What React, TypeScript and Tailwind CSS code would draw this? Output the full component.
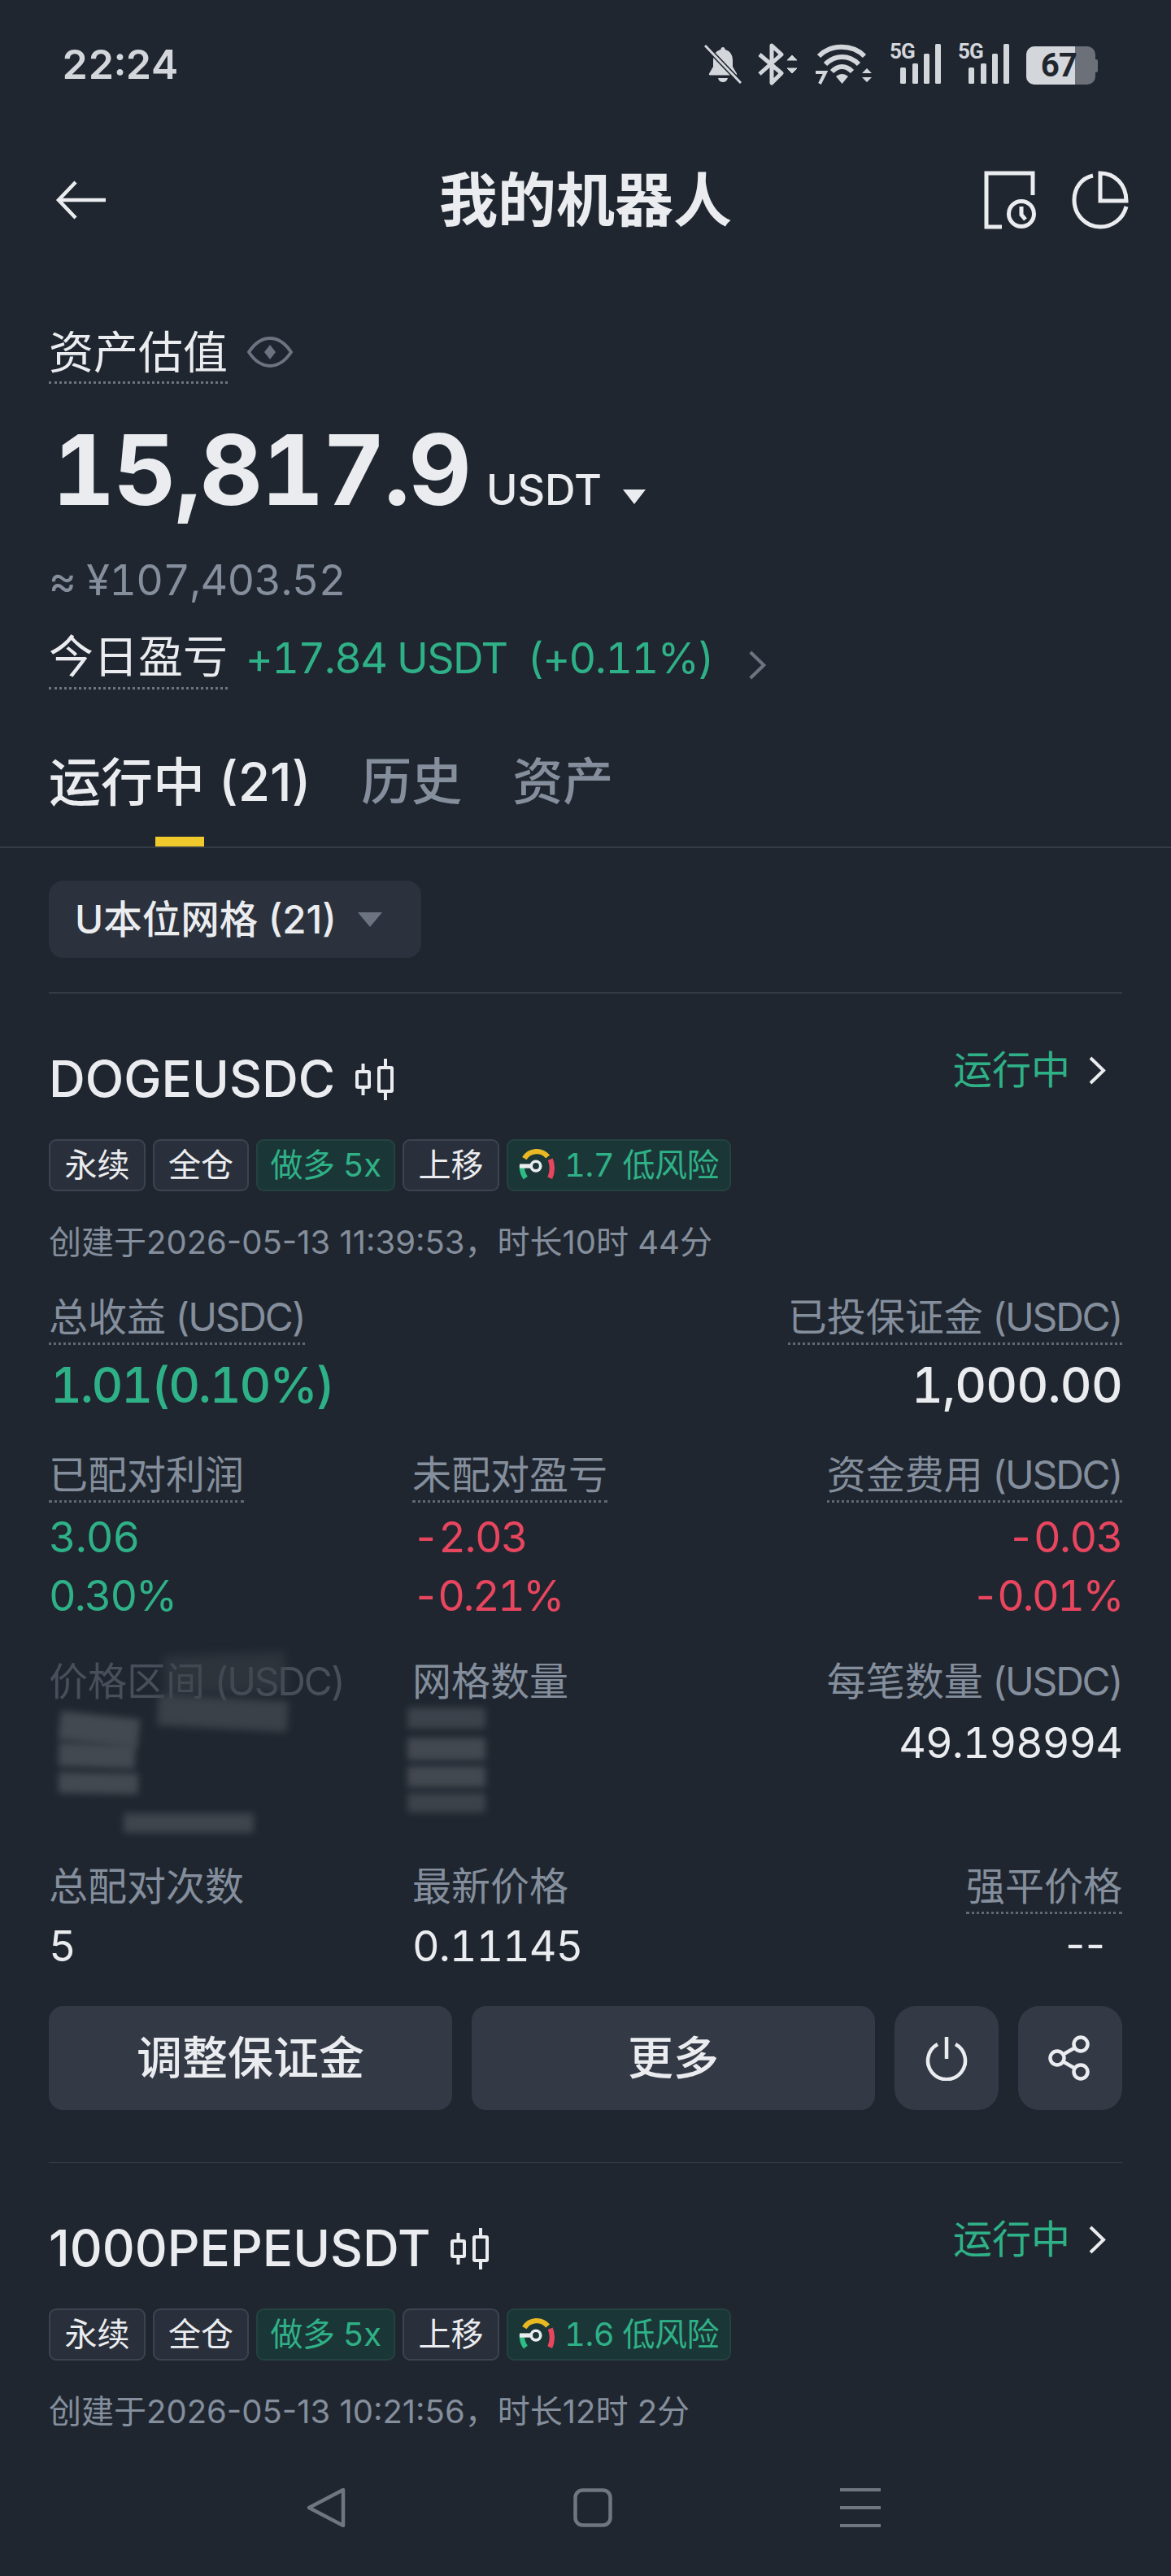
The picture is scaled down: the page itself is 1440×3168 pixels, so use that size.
import React from "react";

const Bell = () => (
  <svg width="46" height="48" viewBox="0 0 46 48" fill="none" className="shrink-0">
    <path d="M23 3c1.600 0 2.500 1 2.700 3 6 1.600 9.300 6.500 9.300 13v8l5 8.500c.5 1-.1 2-1.200 2H7.200c-1.100 0-1.700-1-1.200-2L11 27v-8c0-6.500 3.300-11.400 9.300-13 .2-2 1.100-3 2.700-3z" fill="#d3d6db" />
    <path d="M17 41h12c-.6 3-3 5-6 5s-5.400-2-6-5z" fill="#d3d6db" />
    <path d="M1 1l44 46" stroke="#1f262f" strokeWidth="6" />
    <path d="M1 1l44 46" stroke="#d3d6db" strokeWidth="3" />
  </svg>
);

const Bluetooth = () => (
  <svg width="50" height="52" viewBox="0 0 50 52" fill="none" className="shrink-0">
    <path d="M2 14l27 23-12 12V3l12 11L2 38" stroke="#d3d6db" strokeWidth="5" strokeLinejoin="round" />
    <path d="M36 21l6-6 6 6zM36 31l6 6 6-6z" fill="#d3d6db" stroke="#d3d6db" strokeWidth="1" />
  </svg>
);

const Wifi = () => (
  <svg width="72" height="52" viewBox="0 0 72 52" fill="none" className="shrink-0">
    <path d="M5 16C20 1 46 1 61 16" stroke="#d3d6db" strokeWidth="6" />
    <path d="M13 26C25 14 42 14 54 26" stroke="#d3d6db" strokeWidth="6" />
    <path d="M21 35C29 27 38 27 46 35" stroke="#d3d6db" strokeWidth="6" />
    <path d="M26 41c5-4 10-4 15 0l-7.500 9z" fill="#d3d6db" />
    <path d="M58 37l6-6 6 6zM58 42l6 6 6-6z" fill="#d3d6db" />
    <path d="M1 36h12l-7 14" stroke="#d3d6db" strokeWidth="4" />
  </svg>
);

const Signal = () => (
  <div className="relative w-[64px] h-[52px] shrink-0">
    <span className="absolute left-0 top-[-3px] text-[26px] leading-[26px] font-bold text-[#d3d6db] tracking-[-1px] [font-family:Roboto,sans-serif]">5G</span>
    <svg width="64" height="52" viewBox="0 0 64 52" fill="#d3d6db">
      <rect x="13" y="30" width="7" height="20" rx="1.500" />
      <rect x="28" y="25" width="7" height="25" rx="1.500" />
      <rect x="42" y="13" width="7" height="37" rx="1.500" />
      <rect x="56" y="1" width="7" height="49" rx="1.500" />
    </svg>
  </div>
);

const Battery = () => (
  <div className="relative w-[88px] h-[47px] shrink-0 mt-[3px]">
    <div className="absolute left-0 top-0 w-[85px] h-[47px] rounded-[10px] bg-[#6b7079]" />
    <div className="absolute left-[85px] top-[16px] w-[3px] h-[16px] rounded-r-[2px] bg-[#6b7079]" />
    <div className="absolute left-0 top-0 w-[60px] h-[47px] rounded-l-[10px] bg-[#d3d6db]" />
    <span className="absolute left-[18px] top-0 text-[40px] leading-[47px] font-bold text-[#1f262f] tracking-[-1px] [font-family:Roboto,sans-serif]">67</span>
  </div>
);

const Candles = () => (
  <svg width="50" height="54" viewBox="0 0 50 54" fill="none" stroke="#eaecef" strokeWidth="4" className="shrink-0">
    <rect x="3" y="18" width="15" height="19" rx="1" />
    <path d="M10.500 8v10M10.500 37v10" />
    <rect x="30" y="13" width="16" height="29" rx="1" />
    <path d="M38 2v11M38 42v11" />
  </svg>
);

const Gauge = () => (
  <svg width="44" height="44" viewBox="0 0 42 42" fill="none" className="shrink-0">
    <path d="M6.500 13A17 17 0 0 1 34 11" stroke="#e8b923" strokeWidth="6" />
    <path d="M3.500 21c0 6 1.500 11 4.500 15" stroke="#2ebd85" strokeWidth="6" />
    <path d="M37 14c2.500 6.500 2.500 15-.5 22" stroke="#e8455f" strokeWidth="6" />
    <path d="M1 22h14" stroke="#eaecef" strokeWidth="5" />
    <circle cx="20" cy="22" r="5.500" stroke="#eaecef" strokeWidth="3.500" />
  </svg>
);

const Chevron = ({ c = "#eaecef", w = 22, h = 35 }: { c?: string; w?: number; h?: number }) => (
  <svg width={w} height={h} viewBox="0 0 22 35" fill="none" stroke={c} strokeWidth="4" className="shrink-0">
    <path d="M3 2l16 15.500L3 33" />
  </svg>
);

const Tag = ({ children, green, w }: { children: React.ReactNode; green?: boolean; w: string }) => (
  <div
    className={
      (green
        ? "h-full flex items-center justify-center gap-[12px] rounded-[9px] border-2 border-[#24423f] bg-[#1b3636] text-[#2fb188] text-[40px] tracking-[-0.5px] whitespace-nowrap "
        : "h-full flex items-center justify-center rounded-[9px] border-2 border-[#3d444f] bg-[#2a303b] text-[#eaecef] text-[40px] whitespace-nowrap ") + w
    }
  >
    {children}
  </div>
);

const U = () => <span className="tracking-[-2.2px]"> (USDC)</span>;

const Label = ({ children, dotted = true }: { children: React.ReactNode; dotted?: boolean }) => (
  <div className={dotted
    ? "inline-block h-[64px] text-[48px] leading-[60px] text-[#848e9c] border-b-[3px] border-dotted border-[#5f6873] whitespace-nowrap"
    : "inline-block h-[64px] text-[48px] leading-[60px] text-[#848e9c] whitespace-nowrap"}>
    {children}
  </div>
);

const Val = ({ children, c = "text-[#eaecef]", t = "tracking-[-1px]" }: { children: React.ReactNode; c?: string; t?: string }) => (
  <div className={`h-[72px] text-[52px] leading-[72px] whitespace-nowrap ${c} ${t}`}>{children}</div>
);

const CardHead = ({ name, score, created }: { name: string; score: string; created: string }) => (
  <>
    <div className="flex justify-between items-start h-[179px]">
      <div className="flex items-center gap-[24px] pt-[73px] h-[137px]">
        <span className="text-[62px] leading-[64px] font-medium text-[#eaecef] normal-nums">{name}</span>
        <Candles />
      </div>
      <div className="flex items-center gap-[22px] pt-[66px] pr-[20px] h-[122px]">
        <span className="text-[48px] leading-[56px] text-[#2fb188]">运行中</span>
        <Chevron />
      </div>
    </div>
    <div className="flex gap-[9px] h-[64px]">
      <Tag w="w-[119px]">永续</Tag>
      <Tag w="w-[118px]">全仓</Tag>
      <Tag green w="w-[171px]">做多 5x</Tag>
      <Tag w="w-[119px]">上移</Tag>
      <Tag green w="w-[276px]"><Gauge />{score} 低风险</Tag>
    </div>
    <div className="h-[125px] flex items-center text-[40px] text-[#848e9c] whitespace-nowrap normal-nums">{created}</div>
  </>
);

export default function App() {
  return (
    <div className="w-[1440px] h-[3168px] overflow-hidden bg-[#1f262f] flex flex-col tabular-nums [font-family:Inter,'Noto_Sans_CJK_SC',sans-serif]">
      {/* status bar */}
      <div className="h-[156px] flex items-center justify-between pl-[76px] pr-[90px] pt-[2px]">
        <span className="text-[50px] leading-[60px] font-semibold text-[#d3d6db]">22:24</span>
        <div className="flex items-center gap-[20px]">
          <Bell />
          <Bluetooth />
          <Wifi />
          <Signal />
          <Signal />
          <Battery />
        </div>
      </div>

      {/* nav */}
      <div className="relative h-[180px] flex items-center justify-between pl-[68px] pr-[52px]">
        <svg width="64" height="48" viewBox="0 0 64 48" fill="none" stroke="#eaecef" strokeWidth="4.500">
          <path d="M25 2L4 24l21 22M4 24h58" />
        </svg>
        <span className="absolute left-0 right-0 text-center text-[72px] leading-[84px] font-bold text-[#eaecef]">我的机器人</span>
        <div className="flex items-center gap-[42px]">
          <svg width="66" height="72" viewBox="0 0 66 72" fill="none" stroke="#eaecef" strokeWidth="5">
            <path d="M22 69H3V3h57v27" />
            <circle cx="46" cy="53" r="15.500" />
            <path d="M46 44v10l5 6" />
          </svg>
          <svg width="70" height="72" viewBox="0 0 70 72" fill="none" stroke="#eaecef" strokeWidth="5">
            <path d="M26 6C12 9 3 21 3 36c0 18 14 33 32 33 15 0 28-10 32-25" />
            <path d="M35 3c18 0 32 14 32 34H35z" />
          </svg>
        </div>
      </div>

      {/* assets */}
      <div className="px-[60px]">
        <div className="h-[136px] flex items-end gap-[24px]">
          <div className="h-[70px] text-[55px] leading-[62px] text-[#eaecef] border-b-[3px] border-dotted border-[#6b7480]">资产估值</div>
          <svg width="56" height="38" viewBox="0 0 56 38" fill="none" className="mb-[20px]">
            <path d="M2 19C10 7 18 2 28 2s18 5 26 17c-8 12-16 17-26 17S10 31 2 19z" stroke="#6b7480" strokeWidth="4" />
            <path d="M28 10l7 9-7 9-7-9z" fill="#6b7480" />
          </svg>
        </div>

        <div className="h-[200px] flex items-baseline pt-[36px] pl-[4px]">
          <span className="text-[120px] leading-[140px] font-bold text-[#eaecef] tracking-[-2px]">15,817.9</span>
          <span className="ml-[20px] text-[52px] leading-[60px] font-medium text-[#eaecef]">USDT</span>
          <svg width="28" height="20" viewBox="0 0 28 20" className="ml-[26px]"><path d="M0 1h28L14 19z" fill="#eaecef" /></svg>
        </div>

        <div className="h-[84px] flex items-center text-[52px] text-[#848e9c] tracking-[-0.7px]">≈ ¥107,403.52</div>

        <div className="h-[104px] flex items-start gap-[22px] pt-[20px]">
          <div className="h-[72px] text-[55px] leading-[62px] text-[#eaecef] border-b-[3px] border-dotted border-[#6b7480] whitespace-nowrap">今日盈亏</div>
          <span className="mt-[3px] text-[52px] leading-[62px] text-[#2fb188] whitespace-nowrap tracking-[-1.500px]">+17.84 USDT&nbsp;&nbsp;(+0.11%)</span>
          <div className="ml-[20px] mt-[24px]"><Chevron c="#6b7480" w={24} h={36} /></div>
        </div>
      </div>

      {/* tabs */}
      <div className="relative h-[183px] border-b-2 border-[#343b46] flex items-center gap-[62px] px-[60px] pt-[22px] whitespace-nowrap normal-nums">
        <span className="text-[64px] font-medium text-[#eaecef]">运行中 (21)</span>
        <span className="text-[62px] font-medium text-[#848e9c]">历史</span>
        <span className="text-[62px] font-medium text-[#848e9c]">资产</span>
        <div className="absolute left-[191px] bottom-0 w-[60px] h-[12px] bg-[#f0c92c]" />
      </div>

      <div className="px-[60px] flex flex-col">
        {/* filter */}
        <div className="mt-[40px] w-[458px] h-[95px] rounded-[18px] bg-[#2b323d] flex items-center pl-[32px] gap-[26px] normal-nums">
          <span className="text-[47.500px] font-medium text-[#eaecef] whitespace-nowrap">U本位网格 (21)</span>
          <svg width="30" height="20" viewBox="0 0 30 20"><path d="M0 1h30L15 19z" fill="#6b7480" /></svg>
        </div>
        <div className="mt-[42px] h-[2px] bg-[#343b46]" />

        {/* first card */}
        <CardHead name="DOGEUSDC" score="1.7" created="创建于2026-05-13 11:39:53，时长10时 44分" />

        <div className="flex justify-between">
          <div>
            <Label>总收益<U /></Label>
            <div className="mt-[11px] h-[76px] text-[60px] leading-[76px] font-medium text-[#2fb188] pl-[2px] tracking-[-2.200px]">1.01(0.10%)</div>
          </div>
          <div className="flex flex-col items-end">
            <Label>已投保证金<U /></Label>
            <div className="mt-[11px] h-[76px] text-[60px] leading-[76px] font-medium text-[#eaecef] tracking-[-0.8px]">1,000.00</div>
          </div>
        </div>

        <div className="mt-[43px] grid grid-cols-[447px_1fr_auto]">
          <div>
            <Label>已配对利润</Label>
            <div className="mt-[7px]"><Val c="text-[#2fb188]">3.06</Val><Val c="text-[#2fb188]" t="tracking-[-2px]">0.30%</Val></div>
          </div>
          <div>
            <Label>未配对盈亏</Label>
            <div className="mt-[7px]"><Val c="text-[#e8455f]" t="tracking-[-1.500px]">-2.03</Val><Val c="text-[#e8455f]" t="tracking-[-2.500px]">-0.21%</Val></div>
          </div>
          <div className="flex flex-col items-end">
            <Label>资金费用<U /></Label>
            <div className="mt-[7px] text-right"><Val c="text-[#e8455f]" t="tracking-[-1.500px]">-0.03</Val><Val c="text-[#e8455f]" t="tracking-[-2.500px]">-0.01%</Val></div>
          </div>
        </div>

        <div className="relative mt-[39px] h-[252px] grid grid-cols-[447px_1fr_auto]">
          <div className="opacity-40"><Label dotted={false}>价格区间<U /></Label></div>
          <div><Label dotted={false}>网格数量</Label></div>
          <div className="flex flex-col items-end">
            <Label dotted={false}>每笔数量<U /></Label>
            <div className="mt-[6px]"><Val>49.198994</Val></div>
          </div>
          {/* scribbles over the hidden values */}
          <div className="absolute left-[142px] top-[-4px] w-[150px] h-[48px] bg-[#3c424a] opacity-50 blur-[6px] -rotate-2" />
          <div className="absolute left-[134px] top-[50px] w-[160px] h-[38px] bg-[#3e444c] opacity-90 blur-[5px] rotate-3" />
          <div className="absolute left-[13px] top-[71px] w-[98px] h-[36px] bg-[#474d55] opacity-90 blur-[4px] rotate-6" />
          <div className="absolute left-[12px] top-[106px] w-[94px] h-[30px] bg-[#474d55] opacity-90 blur-[4px] rotate-2" />
          <div className="absolute left-[12px] top-[142px] w-[98px] h-[26px] bg-[#474d55] opacity-90 blur-[4px] rotate-1" />
          <div className="absolute left-[92px] top-[192px] w-[160px] h-[24px] bg-[#474d55] opacity-80 blur-[4px]" />
          <div className="absolute left-[441px] top-[62px] w-[96px] h-[26px] bg-[#444a52] opacity-80 blur-[4px]" />
          <div className="absolute left-[441px] top-[99px] w-[96px] h-[28px] bg-[#474d55] opacity-90 blur-[4px]" />
          <div className="absolute left-[441px] top-[134px] w-[96px] h-[26px] bg-[#474d55] opacity-90 blur-[4px]" />
          <div className="absolute left-[441px] top-[167px] w-[96px] h-[24px] bg-[#444a52] opacity-80 blur-[4px]" />
        </div>

        <div className="grid grid-cols-[447px_1fr_auto]">
          <div><Label dotted={false}>总配对次数</Label><div className="mt-[4px]"><Val>5</Val></div></div>
          <div><Label dotted={false}>最新价格</Label><div className="mt-[4px]"><Val>0.11145</Val></div></div>
          <div className="flex flex-col items-end"><Label>强平价格</Label><div className="mt-[2px] pr-[20px] normal-nums"><Val t="tracking-[1px]">--</Val></div></div>
        </div>

        <div className="mt-[37px] h-[128px] flex gap-[24px]">
          <div className="w-[496px] rounded-[18px] bg-[#333a46] flex items-center justify-center text-[56px] font-medium text-[#eaecef]">调整保证金</div>
          <div className="w-[496px] rounded-[18px] bg-[#333a46] flex items-center justify-center text-[56px] font-medium text-[#eaecef]">更多</div>
          <div className="w-[128px] rounded-[26px] bg-[#333a46] flex items-center justify-center">
            <svg width="52" height="56" viewBox="0 0 52 56" fill="none" stroke="#eaecef" strokeWidth="4.500">
              <path d="M26 2v27" />
              <path d="M15 11a23 23 0 1 0 22 0" />
            </svg>
          </div>
          <div className="w-[128px] rounded-[26px] bg-[#333a46] flex items-center justify-center">
            <svg width="56" height="56" viewBox="0 0 56 56" fill="none" stroke="#eaecef" strokeWidth="4.500">
              <circle cx="41" cy="11" r="8.500" />
              <circle cx="12" cy="28" r="8.500" />
              <circle cx="41" cy="45" r="8.500" />
              <path d="M19.500 23.500l14-8M19.500 32.500l14 8" />
            </svg>
          </div>
        </div>

        <div className="mt-[64px] h-[1px] bg-[#343b46]" />

        {/* second card */}
        <CardHead name="1000PEPEUSDT" score="1.6" created="创建于2026-05-13 10:21:56，时长12时 2分" />
      </div>

      {/* system nav */}
      <div className="relative flex-1">
        <div className="absolute left-0 right-0 top-[32px] pl-[20px] flex justify-center gap-[280px] items-center h-[48px]">
          <svg width="48" height="48" viewBox="0 0 48 48" fill="none" stroke="#6f7680" strokeWidth="4.500" strokeLinejoin="round">
            <path d="M45 2v44L3 24z" />
          </svg>
          <svg width="48" height="48" viewBox="0 0 48 48" fill="none" stroke="#6f7680" strokeWidth="4.500">
            <rect x="2.500" y="2.500" width="43" height="43" rx="9" />
          </svg>
          <svg width="50" height="48" viewBox="0 0 50 48" fill="#6f7680">
            <rect x="0" y="0" width="50" height="4" />
            <rect x="0" y="22" width="50" height="4" />
            <rect x="0" y="44" width="50" height="4" />
          </svg>
        </div>
      </div>
    </div>
  );
}
